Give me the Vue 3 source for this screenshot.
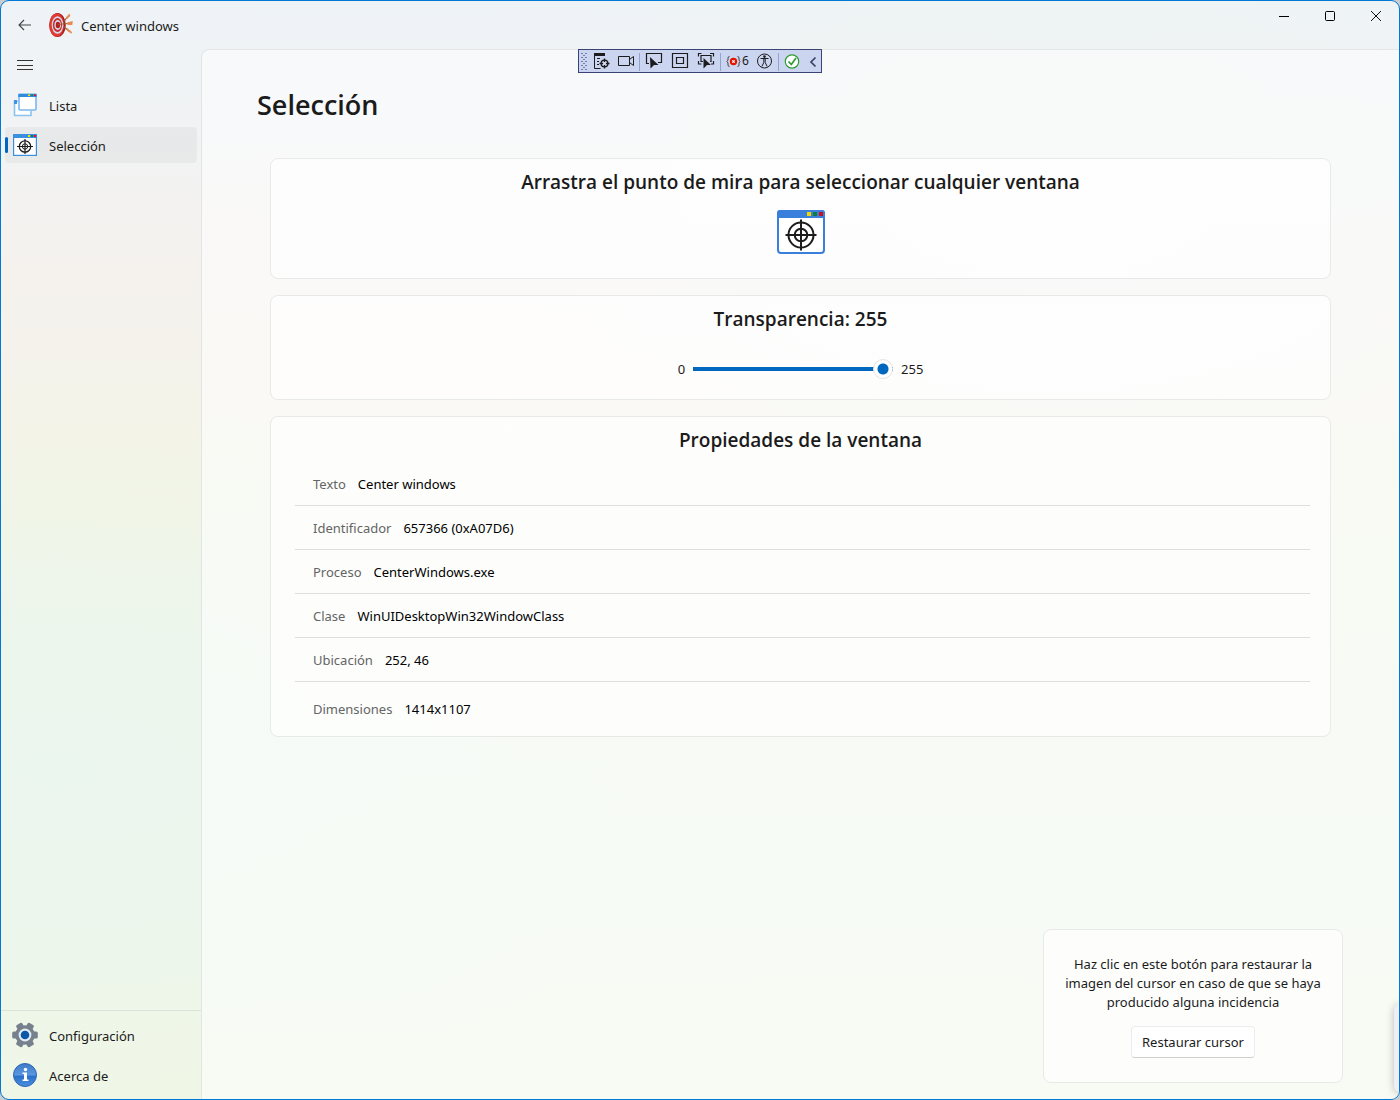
<script setup>
import { ref, computed } from 'vue'

const alpha = ref(255)
const fill = computed(() => `${(alpha.value / 255) * 100}%`)

const properties = [
  { label: 'Texto', value: 'Center windows' },
  { label: 'Identificador', value: '657366 (0xA07D6)' },
  { label: 'Proceso', value: 'CenterWindows.exe' },
  { label: 'Clase', value: 'WinUIDesktopWin32WindowClass' },
  { label: 'Ubicación', value: '252, 46' },
  { label: 'Dimensiones', value: '1414x1107' },
]
</script>

<template>
  <div class="window">
    <header class="titlebar">
      <button class="back" aria-label="Atrás">
        <svg width="14" height="12" viewBox="0 0 14 12" fill="none" stroke="#444" stroke-width="1.1">
          <path d="M13 6H1.200M6 1L1 6l5 5" />
        </svg>
      </button>
      <svg class="logo" width="24" height="26" viewBox="0 0 24 26">
        <ellipse cx="8.500" cy="13" rx="8.300" ry="12" fill="#a81c18" />
        <ellipse cx="7.700" cy="13" rx="7.400" ry="11.600" fill="#e23a32" />
        <ellipse cx="8.500" cy="13" rx="5.800" ry="8.800" fill="#cfdff2" />
        <ellipse cx="8.500" cy="13" rx="4.600" ry="6.900" fill="#cf2a25" />
        <ellipse cx="8.700" cy="13" rx="3.300" ry="4.900" fill="#cfdff2" />
        <ellipse cx="8.900" cy="13" rx="2.200" ry="3.300" fill="#b5201c" />
        <path d="M9 12.500L19 11.500M15 9.500L19 4M15 15l6 4.500" stroke="#9a5a36" stroke-width="1.200" fill="none" />
        <path d="M17 5.500L20.500 1.500 21.300 4 17.800 7.300zM18 10.500L23.800 9 23.300 13 18.500 13zM18 16L23 20 22.500 21.800 18 18.700z" fill="#e88a4e" />
      </svg>
      <h1 class="app-name">Center windows</h1>
      <div class="captions">
        <button aria-label="Minimizar">
          <svg width="12" height="12" viewBox="0 0 12 12"><path d="M1 6.500h10" stroke="#000" /></svg>
        </button>
        <button aria-label="Maximizar">
          <svg width="12" height="12" viewBox="0 0 12 12" fill="none" stroke="#000"><rect x="1.500" y="1.500" width="9" height="9" rx="1" /></svg>
        </button>
        <button aria-label="Cerrar">
          <svg width="12" height="12" viewBox="0 0 12 12" stroke="#111"><path d="M1 1l10 10M11 1L1 11" /></svg>
        </button>
      </div>
    </header>

    <div class="toolbar">
      <svg width="242" height="22" viewBox="0 0 242 22" fill="none">
        <g stroke="#6f7fae" stroke-dasharray="2 2">
          <path d="M2 3.500h6M2 7.500h6M2 11.500h6M2 15.500h6M2 19.500h6M4 5.500h4M4 9.500h4M4 13.500h4M4 17.500h4" />
        </g>
        <g stroke="#1c1c1e">
          <path d="M15 4.500h11" stroke-width="3" />
          <path d="M15.500 4v14.500h6M18 8.500h3M18 11.500h2M18 14.500h2" />
          <circle cx="25.500" cy="13.500" r="3.400" stroke-width="1.300" />
          <path d="M25.500 8.500v3.500M25.500 15v3.500M20.500 13.500h3.500M27 13.500h3.500" stroke-width="1.400" />
          <path d="M39.500 6.500h11v9h-11zM50.500 9.500l4-3v9l-4-3" />
          <path d="M70 13.500h-2.500v-10h15v9H79" stroke-width="1.200" />
          <path d="M93.500 3.500h15v14h-15zM97.500 7.500h7v6h-7z" stroke-width="1.200" />
          <path d="M119.500 6.500v-3h3M131 3.500h3.500v3M119.500 11v3h3M134.500 11v3H132M124 11.500h-2v-6h10v6h-1" stroke-width="1.200" />
          <circle cx="185.500" cy="11" r="7" />
          <path d="M181.500 8.500h8M184.800 9v3.500l-2 4M186.200 9v3.500l2 4" />
        </g>
        <g fill="#1c1c1e">
          <path d="M71 7l8.500 8h-4.500l-3.500 3.500z" />
          <path d="M124.500 8l7.500 7h-4l-3.500 3.500z" />
          <circle cx="185.500" cy="6.600" r="1.300" />
        </g>
        <path d="M60.500 3v18M141.500 3v18M199.500 3v18" stroke="#8fa4d2" />
        <circle cx="154.500" cy="11.500" r="3.700" fill="#e51400" />
        <path d="M153.300 10.300l2.400 2.400M155.700 10.300l-2.400 2.400" stroke="#fff" stroke-width="1.200" />
        <path d="M150.500 6.500q-1.500 0-1.500 1.500v2l-1 1.500 1 1.500v2q0 1.500 1.500 1.500M158.500 6.500q1.500 0 1.500 1.500v2l1 1.500-1 1.500v2q0 1.500-1.500 1.500" stroke="#444" />
        <circle cx="213" cy="11.500" r="6.700" fill="#fff" stroke="#2e9a35" stroke-width="1.200" />
        <path d="M209.500 11.500l2.800 3 4.700-6.500" stroke="#2e9a35" stroke-width="1.700" />
        <path d="M236.500 7.500L232 12l4.500 4.500" stroke="#3a4268" stroke-width="1.700" />
      </svg>
      <span class="count">6</span>
    </div>

    <div class="body">
      <nav class="nav">
        <button class="burger" aria-label="Menú">
          <svg width="16" height="12" viewBox="0 0 16 12" stroke="#333"><path d="M0 1.500h16M0 6.500h16M0 10.500h16" /></svg>
        </button>
        <a class="item" href="#lista">
          <svg width="24" height="24" viewBox="0 0 24 24">
            <path d="M5 8.500H1.500v14H18V18" fill="#fff" stroke="#8ac2f0" stroke-width="1.600" />
            <path d="M1 7h3v4H1z" fill="#3f94e4" />
            <rect x="6" y="1.500" width="17" height="15.500" rx="1" fill="#fff" stroke="#7ab8f0" stroke-width="1.600" />
            <path d="M5.300.7h18.400v3.300H5.300z" fill="#2f8ae0" />
            <path d="M15 1.500h2v1.600h-2z" fill="#ffe000" /><path d="M18 1.500h2v1.600h-2z" fill="#178a4a" /><path d="M21 1.500h2v1.600h-2z" fill="#e81123" />
          </svg>
          <span>Lista</span>
        </a>
        <a class="item active" href="#seleccion" aria-current="page">
          <svg width="24" height="24" viewBox="0 0 24 24">
            <rect x=".6" y="1.600" width="22.800" height="20.800" fill="#fff" stroke="#3a8fdf" stroke-width="1.200" />
            <path d="M0 1h24v4H0z" fill="#3a8fdf" />
            <path d="M15 2h2v2h-2z" fill="#ffe000" /><path d="M18 2h2v2h-2z" fill="#107c41" /><path d="M21 2h2v2h-2z" fill="#d81123" />
            <g fill="none" stroke="#1c1c1c">
              <circle cx="12" cy="13.500" r="5.700" stroke-width="1.300" /><circle cx="12" cy="13.500" r="2.700" />
              <path d="M12 6v15M4 13.500h16" stroke-width="1.200" />
            </g>
          </svg>
          <span>Selección</span>
        </a>
        <div class="footer">
          <a class="item" href="#configuracion">
            <svg width="24" height="26" viewBox="0 0 24 26">
              <g fill="#77818d">
                <circle cx="12" cy="13" r="9.800" />
                <rect x="-.8" y="9.500" width="25.600" height="7" rx="1.500" />
                <rect x="-.8" y="9.500" width="25.600" height="7" rx="1.500" transform="rotate(60 12 13)" />
                <rect x="-.8" y="9.500" width="25.600" height="7" rx="1.500" transform="rotate(120 12 13)" />
              </g>
              <circle cx="12" cy="13" r="6.400" fill="#e3ebf4" />
              <circle cx="12" cy="13" r="4.300" fill="#0b57a8" />
            </svg>
            <span>Configuración</span>
          </a>
          <a class="item" href="#acerca">
            <svg width="24" height="24" viewBox="0 0 24 24">
              <defs>
                <linearGradient id="info" x1="0" y1="0" x2="0" y2="1">
                  <stop offset="0" stop-color="#3f78c8" /><stop offset=".5" stop-color="#5a98e0" />
                  <stop offset=".55" stop-color="#2a6fca" /><stop offset="1" stop-color="#4a90e0" />
                </linearGradient>
              </defs>
              <circle cx="12" cy="12" r="11.500" fill="url(#info)" stroke="#2f66b4" />
              <circle cx="12.500" cy="6.500" r="1.700" fill="#fff" />
              <path d="M9.500 9.500h4.500v7h1.500V18H9.500v-1.500H11V11H9.500z" fill="#fff" />
            </svg>
            <span>Acerca de</span>
          </a>
        </div>
      </nav>

      <main class="content">
        <h2 class="page-title">Selección</h2>

        <section class="card picker">
          <h3>Arrastra el punto de mira para seleccionar cualquier ventana</h3>
          <svg width="48" height="48" viewBox="0 0 48 48">
            <rect x="1" y="3" width="46" height="42" rx="3" fill="#fff" stroke="#3a7fdc" stroke-width="2" />
            <path d="M0 10V5q0-3 3-3h42q3 0 3 3v5z" fill="#3a7fdc" />
            <path d="M30 4h4v4h-4z" fill="#f2d600" /><path d="M36 4h4v4h-4z" fill="#107c41" /><path d="M42 4h4v4h-4z" fill="#c8101e" />
            <g fill="none" stroke="#1c1c1c" stroke-width="2">
              <circle cx="24" cy="27" r="12.500" /><circle cx="24" cy="27" r="6.300" />
              <path d="M24 11.500v31M8.500 27h31" />
            </g>
          </svg>
        </section>

        <section class="card opacity">
          <h3><label for="alpha">Transparencia: {{ alpha }}</label></h3>
          <div class="slider">
            <span>0</span>
            <input id="alpha" v-model.number="alpha" type="range" min="0" max="255" :style="{ '--fill': fill }" />
            <span>255</span>
          </div>
        </section>

        <section class="card properties">
          <h3>Propiedades de la ventana</h3>
          <dl>
            <div v-for="p in properties" :key="p.label" class="row">
              <dt>{{ p.label }}</dt>
              <dd>{{ p.value }}</dd>
            </div>
          </dl>
        </section>

        <aside class="card restore">
          <p>Haz clic en este botón para restaurar la imagen del cursor en caso de que se haya producido alguna incidencia</p>
          <button>Restaurar cursor</button>
        </aside>
      </main>
    </div>
    <div class="edge-panel"></div>
  </div>
</template>

<style>
body {
  background: #c9cdd0;
}
</style>

<style scoped>
.window {
  position: relative;
  box-sizing: border-box;
  min-height: 100vh;
  display: flex;
  flex-direction: column;
  overflow: hidden;
  border: 1px solid #0078d4;
  border-radius: 9px;
  color: #1b1b1b;
  font: 13px/20px "Noto Sans", "Open Sans", sans-serif;
  background:
    radial-gradient(ellipse 50% 30% at 4% 70%, #ebf6ee 0%, #ebf6ee00 100%),
    radial-gradient(ellipse 40% 30% at 75% 15%, #eff4f3 0%, #eff4f300 100%),
    linear-gradient(#eef3f7 0%, #f1f3f4 12%, #f5f2ee 24%, #f4f3ea 36%, #f2f4e6 46%, #eff5e8 56%, #eef6ea 80%, #f0f6e6 100%);
}

button {
  font: inherit;
  color: inherit;
  border: 0;
  background: none;
  padding: 0;
}

.titlebar {
  display: flex;
  align-items: center;
  height: 48px;
  padding-left: 16px;
}

.back {
  display: flex;
  justify-content: center;
  width: 16px;
}

.logo {
  margin-left: 16px;
}

.app-name {
  margin: 2px 0 0 8px;
  font-size: 13px;
  font-weight: 400;
}

.captions {
  display: flex;
  align-self: flex-start;
  margin-left: auto;
}

.captions button {
  display: flex;
  align-items: center;
  justify-content: center;
  width: 46px;
  height: 30px;
}

.toolbar {
  position: absolute;
  top: 48px;
  left: 50%;
  width: 242px;
  height: 22px;
  transform: translateX(-50%);
  border: 1px solid #3a4374;
  background: #ccd5f0;
}

.toolbar svg {
  display: block;
}

.count {
  position: absolute;
  top: 1px;
  left: 163px;
  font-size: 12px;
}

.body {
  flex: 1;
  display: flex;
}

.nav {
  box-sizing: border-box;
  width: 200px;
  flex: none;
  display: flex;
  flex-direction: column;
  gap: 4px;
}

.burger {
  display: flex;
  align-items: center;
  width: 40px;
  height: 32px;
  padding-left: 16px;
  margin-bottom: 2px;
}

.item {
  position: relative;
  box-sizing: border-box;
  display: flex;
  align-items: center;
  height: 36px;
  margin: 0 4px;
  padding-left: 8px;
  border-radius: 4px;
  color: inherit;
  text-decoration: none;
}

.item svg {
  flex: none;
  overflow: visible;
}

.item span {
  margin-left: 12px;
  padding-top: 2px;
}

.active {
  background: #0000000a;
}

.active::before {
  content: "";
  position: absolute;
  left: 0;
  top: 10px;
  width: 3px;
  height: 16px;
  border-radius: 2px;
  background: #0067c0;
}

.footer {
  display: flex;
  flex-direction: column;
  gap: 4px;
  margin-top: auto;
  padding: 6px 0;
  border-top: 1px solid #dbe4dc;
}

.content {
  flex: 1;
  min-width: 0;
  display: flex;
  flex-direction: column;
  gap: 16px;
  padding: 35px 56px 16px 55px;
  border: solid #e2e6e6;
  border-width: 1px 0 0 1px;
  border-top-left-radius: 8px;
  background: #ffffff88;
}

.page-title {
  margin: 0 0 17px;
  font-family: "Open Sans", "Noto Sans", sans-serif;
  font-size: 27px;
  line-height: 40px;
  font-weight: 600;
}

.card {
  box-sizing: border-box;
  margin: 0 12px 0 13px;
  border: 1px solid #e8eae8;
  border-radius: 8px;
  background: #ffffffb0;
}

.card h3 {
  margin: 0;
  font-family: "Open Sans", "Noto Sans", sans-serif;
  font-size: 19px;
  line-height: 28px;
  font-weight: 600;
  text-align: center;
}

.picker {
  display: flex;
  flex-direction: column;
  align-items: center;
  gap: 12px;
  padding: 9px 0 22px;
}

.picker svg {
  display: block;
}

.opacity {
  padding: 9px 0 18px;
}

.slider {
  display: flex;
  align-items: center;
  justify-content: center;
  gap: 8px;
  margin-top: 24px;
  height: 24px;
}

.slider input {
  appearance: none;
  width: 200px;
  height: 20px;
  margin: 0;
  background: linear-gradient(to right, #0067c0 var(--fill), #868686 0) center / 100% 4px no-repeat;
  border-radius: 2px;
}

.slider input::-webkit-slider-thumb {
  appearance: none;
  width: 20px;
  height: 20px;
  box-sizing: border-box;
  border: 1px solid #e4e4e4;
  border-radius: 50%;
  background: radial-gradient(circle, #0067c0 5px, #fff 6px);
}

.properties {
  padding: 9px 0 0;
}

.properties dl {
  margin: 8px 20px 0 24px;
}

.row {
  display: flex;
  align-items: center;
  gap: 12px;
  height: 43px;
  padding: 0 18px;
  border-bottom: 1px solid #dededc;
}

.row:last-child {
  height: 54px;
  border-bottom: 0;
}

.row dt {
  color: #646464;
}

.row dd {
  margin: 0;
  color: #000;
}

.restore {
  width: 300px;
  align-self: flex-end;
  margin: auto 0 0;
  padding: 25px 19px 24px;
  text-align: center;
}

.restore p {
  margin: 0 0 14px;
  line-height: 19px;
}

.restore button {
  height: 32px;
  padding: 0 10px;
  border: 1px solid #ececec;
  border-bottom-color: #cfcfcf;
  border-radius: 4px;
  background: #fff;
}

.edge-panel {
  position: absolute;
  right: -7px;
  bottom: 7px;
  width: 12px;
  height: 88px;
  border-radius: 6px;
  background: #eeeef4;
  box-shadow: 0 1px 8px #00000040;
}
</style>
